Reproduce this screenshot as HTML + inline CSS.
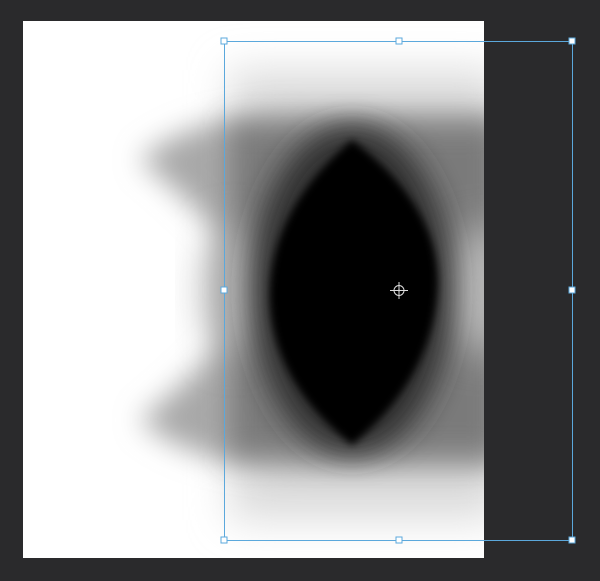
<!DOCTYPE html>
<html><head><style>
html,body{margin:0;padding:0;background:#2a2a2c;width:600px;height:581px;overflow:hidden}
</style></head><body>
<svg width="600" height="581" xmlns="http://www.w3.org/2000/svg" style="position:absolute;left:0;top:0">
<defs>
<clipPath id="c"><rect x="23" y="21" width="461" height="537"/></clipPath>
<filter id="b1" x="-50%" y="-50%" width="200%" height="200%"><feGaussianBlur stdDeviation="20"/></filter>
<filter id="b2" x="-50%" y="-50%" width="200%" height="200%"><feGaussianBlur stdDeviation="14"/></filter>
<filter id="b3" x="-50%" y="-50%" width="200%" height="200%"><feGaussianBlur stdDeviation="4"/></filter>
</defs>
<rect x="23" y="21" width="461" height="537" fill="#fff"/>
<g clip-path="url(#c)">
<rect x="230" y="70" width="270" height="450" fill="#dcdcdc" filter="url(#b1)"/>
<path d="M140,160 Q190,115 300,112 L500,112 L500,470 L300,470 Q190,465 140,420 Q190,380 225,340 L225,240 Q190,200 140,160Z" fill="#a8a8a8" filter="url(#b2)"/>
<rect x="230" y="125" width="270" height="330" fill="#7a7a7a" filter="url(#b2)"/>
<ellipse cx="235" cy="290" rx="30" ry="65" fill="#b0b0b0" filter="url(#b1)"/>
<ellipse cx="480" cy="290" rx="35" ry="65" fill="#b8b8b8" filter="url(#b1)"/>
<ellipse cx="352" cy="290" rx="100" ry="165" fill="#333" filter="url(#b2)"/>
<path d="M352,140 Q445,210 437,295 Q430,380 352,445 Q270,380 270,295 Q270,210 352,140Z" fill="#000" filter="url(#b3)"/>
</g>
<g stroke="#5ba8dc" stroke-width="1" fill="none">
<rect x="224.5" y="41.5" width="348" height="499"/>
</g>
<g fill="#fff" stroke="#5ba8dc" stroke-width="1">
<rect x="221" y="38" width="6" height="6"/><rect x="396" y="38" width="6" height="6"/><rect x="569" y="38" width="6" height="6"/>
<rect x="221" y="287" width="6" height="6"/><rect x="569" y="287" width="6" height="6"/>
<rect x="221" y="537" width="6" height="6"/><rect x="396" y="537" width="6" height="6"/><rect x="569" y="537" width="6" height="6"/>
</g>
<g stroke="#ddd" stroke-width="1" fill="none">
<circle cx="399" cy="290.5" r="5"/>
<line x1="399" y1="282" x2="399" y2="299"/>
<line x1="390" y1="290.5" x2="408" y2="290.5"/>
</g>
<circle cx="399" cy="290.5" r="1" fill="#ddd"/>
</svg>
</body></html>
